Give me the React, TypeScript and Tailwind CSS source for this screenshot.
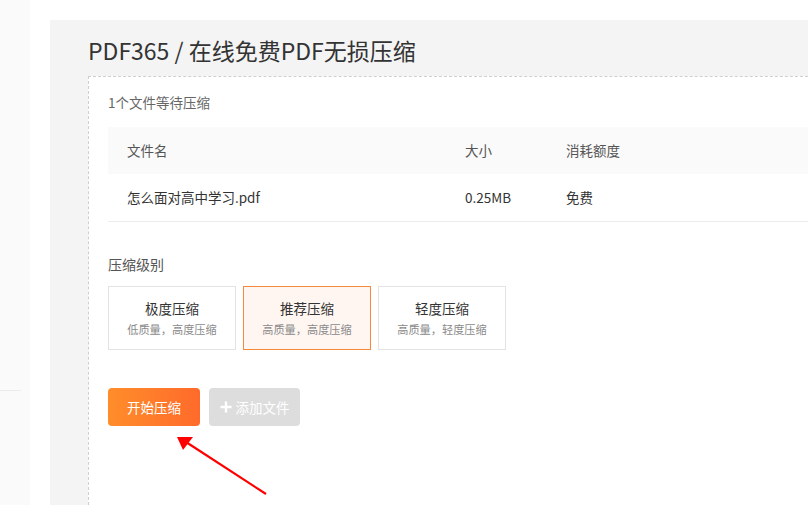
import React from "react";

const font = { fontFamily: '"Noto Sans CJK SC", "Noto Sans", sans-serif' };

function LevelCard({ title, sub, active }: { title: string; sub: string; active?: boolean }) {
  return (
    <div
      className={
        "w-[128px] h-[64px] flex flex-col items-center justify-center border " +
        (active ? "border-[#f5883a] bg-[#fff6f2]" : "border-[#e3e3e3] bg-white")
      }
    >
      <div className="text-[13.5px] leading-[18px] text-[#333]">{title}</div>
      <div className="text-[11.2px] leading-[16px] text-[#8a8a8a] mt-[4px]">{sub}</div>
    </div>
  );
}

export default function App() {
  return (
    <div className="relative w-[808px] h-[505px] overflow-hidden bg-white flex" style={font}>
      <div className="w-[30px] shrink-0 bg-[#fafafa] flex flex-col">
        <div className="h-[390px]" />
        <div className="w-[21px] h-[1px] bg-[#ececec]" />
      </div>
      <div className="w-[20px] shrink-0" />
      <div className="flex-1 pt-[20px] flex flex-col">
        <div className="flex-1 bg-[#f4f4f4] pl-[38px] flex flex-col">
          <div className="h-[56px] flex items-center pt-[4px] text-[23px] text-[#333] whitespace-nowrap">
            PDF365 / 在线免费PDF无损压缩
          </div>
          <div className="flex-1 bg-white border border-dashed border-[#cfcfcf] border-r-0 border-b-0 pl-[19px] w-[740px]">
            <div className="h-[50px] flex items-center pt-[1px] text-[13.5px] text-[#666]">1个文件等待压缩</div>
            <div className="w-[720px] text-[13.5px] text-[#555]">
              <div className="h-[47px] bg-[#fafafa] flex items-center">
                <div className="w-[357px] pl-[19px]">文件名</div>
                <div className="w-[101px]">大小</div>
                <div>消耗额度</div>
              </div>
              <div className="h-[48px] flex items-center border-b border-[#ececec] text-[#333]">
                <div className="w-[357px] pl-[19px]">怎么面对高中学习.pdf</div>
                <div className="w-[101px]">0.25MB</div>
                <div>免费</div>
              </div>
            </div>
            <div className="h-[64px] flex items-center pt-[20px] text-[14px] text-[#555]">压缩级别</div>
            <div className="flex gap-[7px]">
              <LevelCard title="极度压缩" sub="低质量，高度压缩" />
              <LevelCard title="推荐压缩" sub="高质量，高度压缩" active />
              <LevelCard title="轻度压缩" sub="高质量，轻度压缩" />
            </div>
            <div className="flex gap-[9px] mt-[38px]">
              <div className="w-[92px] h-[38px] rounded-[4px] bg-gradient-to-r from-[#ff8d2a] to-[#ff6a2b] text-white text-[13.5px] flex items-center justify-center">
                开始压缩
              </div>
              <div className="w-[91px] h-[38px] rounded-[4px] bg-[#dddddd] text-white text-[13.5px] flex items-center justify-center gap-[4px]">
                <svg width="12" height="12" viewBox="0 0 12 12">
                  <path d="M6 0.5V11.5M0.5 6H11.5" stroke="white" strokeWidth="2.4" />
                </svg>
                添加文件
              </div>
            </div>
          </div>
        </div>
      </div>
      <svg className="absolute left-0 top-0 pointer-events-none" width="808" height="505">
        <line x1="266" y1="494" x2="186" y2="442" stroke="#ff0000" strokeWidth="2.2" />
        <polygon points="177,437 193,437 183,450" fill="#ff0000" />
      </svg>
    </div>
  );
}
